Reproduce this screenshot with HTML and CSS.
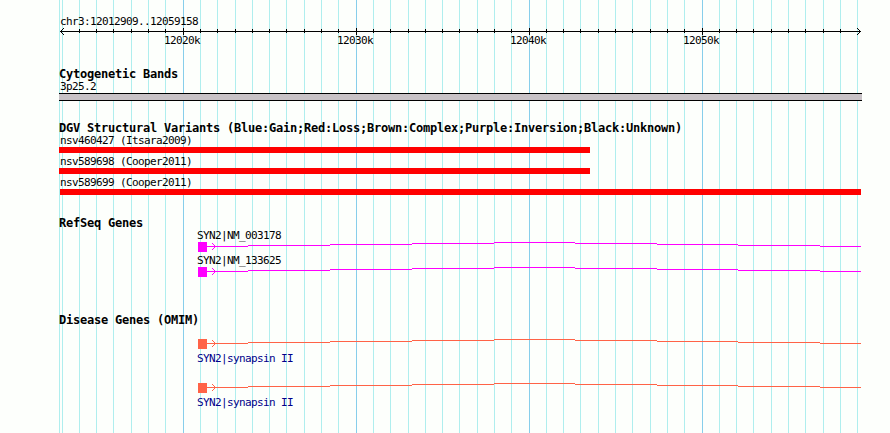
FILE: index.html
```
<!DOCTYPE html>
<html lang="en">
<head>
    <meta charset="UTF-8">
    <title>chr3:12012909..12059158</title>
    <link rel="stylesheet" href="styles.css">
</head>
<body>
<svg class="grid" width="890" height="433">
    <path class="minor" d="M59.5 0v433M62.5 0v433M79.5 0v433M96.5 0v433M113.5 0v433M131.5 0v433M148.5 0v433M165.5 0v433M200.5 0v433M217.5 0v433M235.5 0v433M252.5 0v433M269.5 0v433M286.5 0v433M304.5 0v433M321.5 0v433M338.5 0v433M373.5 0v433M390.5 0v433M408.5 0v433M425.5 0v433M442.5 0v433M459.5 0v433M477.5 0v433M494.5 0v433M511.5 0v433M546.5 0v433M563.5 0v433M580.5 0v433M598.5 0v433M615.5 0v433M632.5 0v433M650.5 0v433M667.5 0v433M684.5 0v433M719.5 0v433M736.5 0v433M753.5 0v433M771.5 0v433M788.5 0v433M805.5 0v433M823.5 0v433M840.5 0v433M857.5 0v433"/>
    <path class="major" d="M183.5 0v433M356.5 0v433M529.5 0v433M702.5 0v433"/>
</svg>
<div id="contain">
    <div class="ruler">
        <div class="label">chr3:12012909..12059158</div>
        <svg class="axis" width="803" height="21" viewBox="59 27 803 21">
            <path d="M60 31.5H861"/>
            <path d="M63 28.5h1M62 29.5h1M61 30.5h1M61 32.5h1M62 33.5h1M63 34.5h1M857 28.5h1M858 29.5h1M859 30.5h1M859 32.5h1M858 33.5h1M857 34.5h1"/>
            <path d="M79.5 29v4M96.5 29v4M113.5 29v4M131.5 29v4M148.5 29v4M165.5 29v4M200.5 29v4M217.5 29v4M235.5 29v4M252.5 29v4M269.5 29v4M286.5 29v4M304.5 29v4M321.5 29v4M338.5 29v4M373.5 29v4M390.5 29v4M408.5 29v4M425.5 29v4M442.5 29v4M459.5 29v4M477.5 29v4M494.5 29v4M511.5 29v4M546.5 29v4M563.5 29v4M580.5 29v4M598.5 29v4M615.5 29v4M632.5 29v4M650.5 29v4M667.5 29v4M684.5 29v4M719.5 29v4M736.5 29v4M753.5 29v4M771.5 29v4M788.5 29v4M805.5 29v4M823.5 29v4M840.5 29v4"/>
            <path d="M183.5 28v7M356.5 28v7M529.5 28v7M702.5 28v7"/>
            <text x="164" y="44">12020k</text>
            <text x="337" y="44">12030k</text>
            <text x="510" y="44">12040k</text>
            <text x="683" y="44">12050k</text>
        </svg>
    </div>

    <div class="track bands">
        <h2>Cytogenetic Bands</h2>
        <div class="label">3p25.2</div>
        <div class="band"></div>
    </div>

    <div class="track variants">
        <h2>DGV Structural Variants (Blue:Gain;Red:Loss;Brown:Complex;Purple:Inversion;Black:Unknown)</h2>
        <div class="label">nsv460427 (Itsara2009)</div>
        <div class="bar"></div>
        <div class="label">nsv589698 (Cooper2011)</div>
        <div class="bar"></div>
        <div class="label">nsv589699 (Cooper2011)</div>
        <div class="bar full"></div>
    </div>

    <div class="track refseq">
        <h2>RefSeq Genes</h2>
        <div class="gene">
            <div class="label">SYN2|NM_003178</div>
            <svg width="664" height="13"><use href="#syn2"/></svg>
        </div>
        <div class="gene">
            <div class="label">SYN2|NM_133625</div>
            <svg width="664" height="13"><use href="#syn2"/></svg>
        </div>
    </div>

    <div class="track omim">
        <h2>Disease Genes (OMIM)</h2>
        <div class="gene">
            <svg width="664" height="13"><use href="#syn2"/></svg>
            <div class="label">SYN2|synapsin II</div>
        </div>
        <div class="gene">
            <svg width="664" height="13"><use href="#syn2"/></svg>
            <div class="label">SYN2|synapsin II</div>
        </div>
    </div>
</div>
<svg class="defs" width="0" height="0">
    <defs>
        <!-- exon, strand arrow, intron -->
        <g id="syn2">
            <rect x="0" y="1" width="9" height="10" fill="currentColor"/>
            <path fill="none" stroke="currentColor" d="M14 2.5h1M15 3.5h1M16 4.5h1M17 5.5h1M16 6.5h1M15 7.5h1M14 8.5h1"/>
            <path fill="none" stroke="currentColor" d="M9 5.5H50M50 4.5H132M132 3.5H214M214 2.5H296M296 1.5H377M377 2.5H459M459 3.5H540M540 4.5H622M622 5.5H663"/>
        </g>
    </defs>
</svg>
</body>
</html>
```
FILE: styles.css
```
*{
    margin: 0;
    padding: 0;
}
body{
    height: 433px;
    background: #fdfffc;
    font-family: "DejaVu Sans Mono", monospace;
    color: #000;
    overflow: hidden;
}
svg{
    display: block;
    shape-rendering: crispEdges;
}
.grid{
    position: absolute;
    top: 0;
    left: 0;
    z-index: -1;
}
.grid .minor{
    stroke: #afeeee;
}
.grid .major{
    stroke: #87ceeb;
}
.defs{
    position: absolute;
}
#contain{
    width: 803px;
    padding: 15px 0 0 59px;
}
.label,.axis text{
    font-size: 11px;
    letter-spacing: -0.622px;
    white-space: pre;
}
.label{
    height: 12px;
    line-height: 14px;
    padding-left: 1px;
}
.axis path{
    fill: none;
    stroke: #000;
}
h2{
    height: 13px;
    font-size: 12px;
    line-height: 15px;
    letter-spacing: -0.224px;
    white-space: pre;
}
.bands{
    margin-top: 19px;
}
.band{
    height: 6px;
    margin-top: 1px;
    border-top: 1px solid #000;
    border-bottom: 1px solid #000;
    background: #c8c2c6;
}
.variants{
    margin-top: 20px;
}
.bar{
    width: 531px;
    height: 6px;
    margin: 1px 0 2px;
    background: #f00;
}
.bar.full{
    width: 801px;
    margin: 1px 0 0 1px;
}
.refseq{
    margin-top: 21px;
}
.gene{
    padding-left: 139px;
}
.gene .label{
    padding-left: 0;
    margin-left: -1px;
}
.refseq .gene svg{
    color: #f0f;
}
.omim{
    margin-top: 34px;
}
.omim .gene{
    padding-top: 12px;
}
.omim .gene + .gene{
    padding-top: 18px;
}
.omim .gene svg{
    color: #ff6347;
}
.omim .label{
    margin-top: 1px;
    color: #00008b;
}
```
